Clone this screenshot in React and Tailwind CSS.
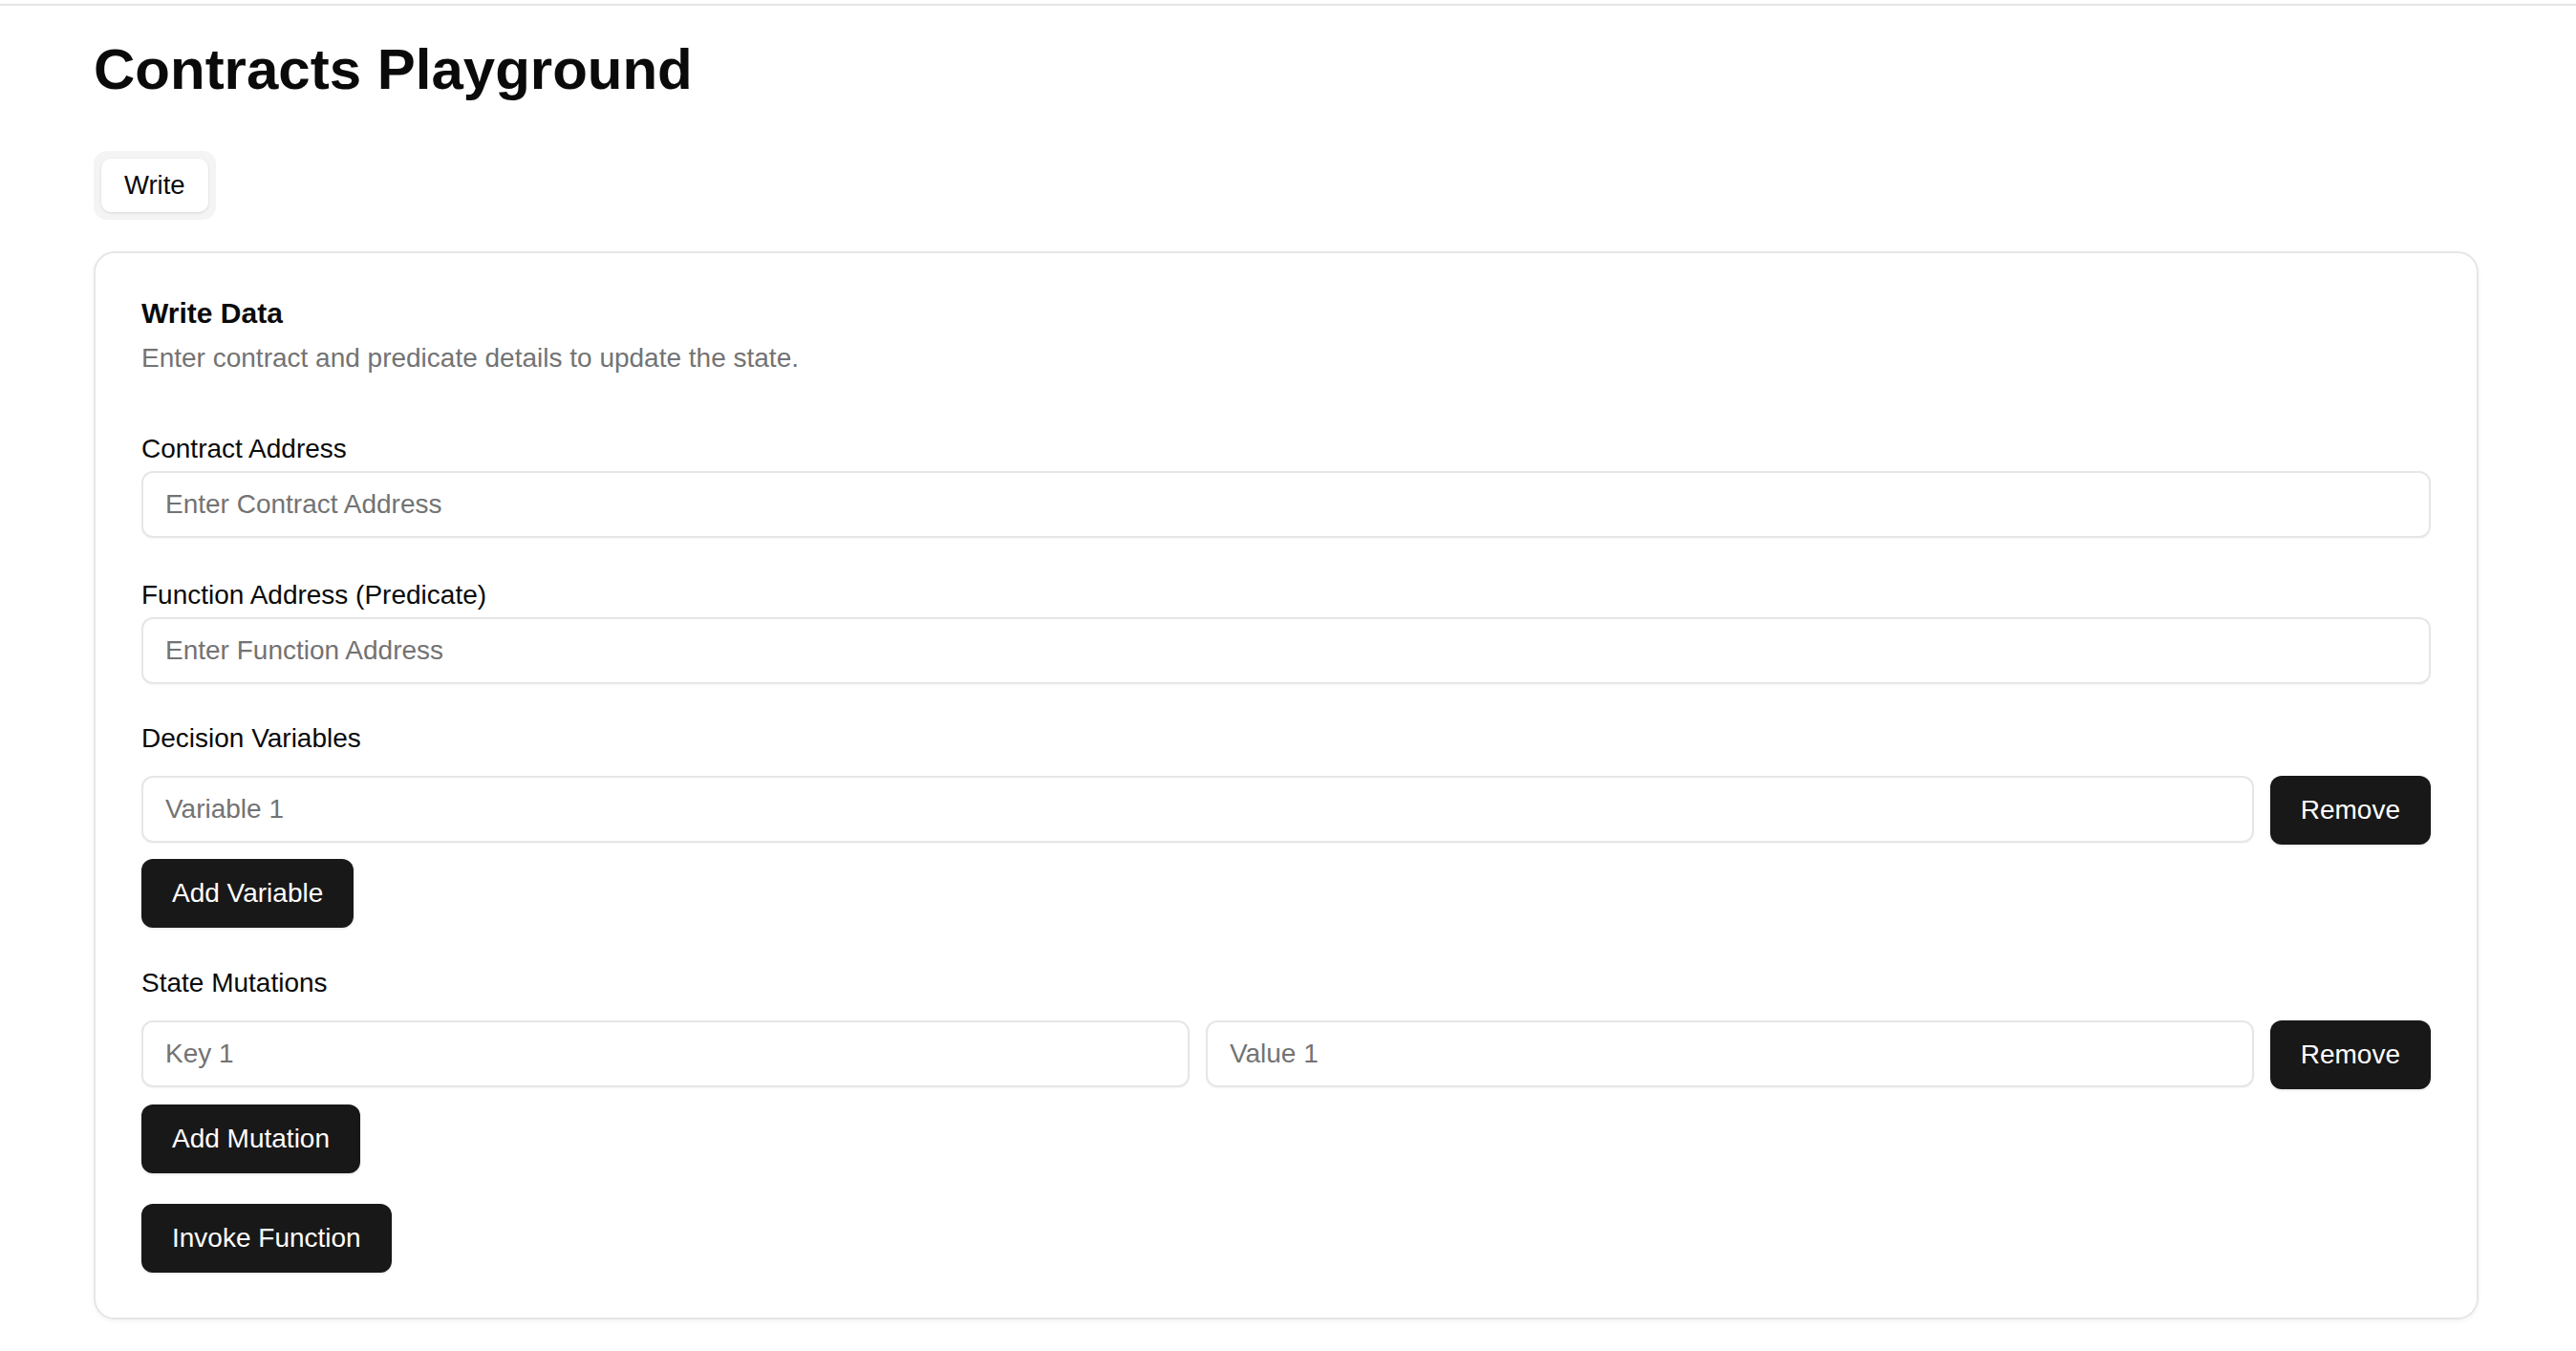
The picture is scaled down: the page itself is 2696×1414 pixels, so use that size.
export default function App() {
  const inputCls =
    "block h-[70px] w-full rounded-[12px] border-2 border-[#e6e6e6] bg-white px-[23px] text-[28px] leading-none text-[#0a0a0a] outline-none placeholder:text-[#737373] shadow-[0_1px_2px_rgba(0,0,0,0.04)]";
  const btnCls =
    "flex h-[72px] w-fit shrink-0 items-center justify-center rounded-[12px] bg-[#181818] px-[32px] text-[28px] leading-none text-white shadow-[0_1px_3px_rgba(0,0,0,0.12)]";
  const labelCls = "block text-[28px] leading-[27.5px] text-[#0a0a0a]";

  return (
    <div className="min-h-screen bg-white font-['Liberation_Sans',Arial,sans-serif] text-[#0a0a0a]">
      <div className="h-[4px]" />
      <div className="h-[2px] bg-[#e5e5e5]" />
      <div className="pl-[98px] pr-[102px]">
        <h1 className="mt-[37px] text-[60px] font-bold leading-[60px] text-[#0a0a0a]">
          Contracts Playground
        </h1>

        <div className="mt-[55px] flex w-fit rounded-[14px] bg-[#f4f4f4] p-[8px]">
          <button className="h-[56px] rounded-[10px] bg-white px-[24px] text-[27.5px] leading-none text-[#0a0a0a] shadow-[0_1px_3px_rgba(0,0,0,0.12)]">
            Write
          </button>
        </div>

        <div className="mt-[33px] rounded-[22px] border-2 border-[#e6e6e6] bg-white px-[48px] pb-[47px] pt-[48px] shadow-[0_2px_4px_rgba(0,0,0,0.05)]">
          <h2 className="text-[30px] font-bold leading-[30px] text-[#0a0a0a]">Write Data</h2>
          <p className="mt-[18px] text-[28px] leading-[27.5px] text-[#737373]">
            Enter contract and predicate details to update the state.
          </p>

          <label className={`${labelCls} mt-[67px]`}>Contract Address</label>
          <input className={`${inputCls} mt-[10px]`} placeholder="Enter Contract Address" />

          <label className={`${labelCls} mt-[46px]`}>Function Address (Predicate)</label>
          <input className={`${inputCls} mt-[9px]`} placeholder="Enter Function Address" />

          <label className={`${labelCls} mt-[43px]`}>Decision Variables</label>
          <div className="mt-[26px] flex items-start gap-[17px]">
            <div className="min-w-0 flex-1">
              <input className={inputCls} placeholder="Variable 1" />
            </div>
            <button className={btnCls}>Remove</button>
          </div>
          <button className={`${btnCls} mt-[15px]`}>Add Variable</button>

          <label className={`${labelCls} mt-[44px]`}>State Mutations</label>
          <div className="mt-[25px] flex items-start gap-[17px]">
            <div className="min-w-0 flex-1">
              <input className={inputCls} placeholder="Key 1" />
            </div>
            <div className="min-w-0 flex-1">
              <input className={inputCls} placeholder="Value 1" />
            </div>
            <button className={btnCls}>Remove</button>
          </div>
          <button className={`${btnCls} mt-[16px]`}>Add Mutation</button>

          <button className={`${btnCls} mt-[32px]`}>Invoke Function</button>
        </div>
      </div>
    </div>
  );
}
